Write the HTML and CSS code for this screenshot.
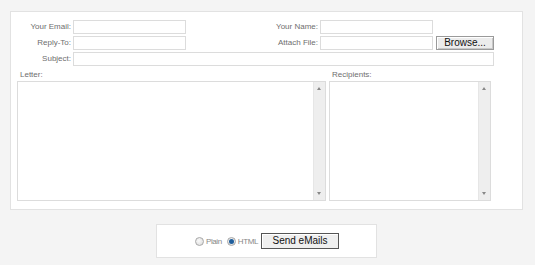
FILE: index.html
```html
<!DOCTYPE html>
<html>
<head>
<meta charset="utf-8">
<link rel="stylesheet" href="styles.css">
</head>
<body>
<div class="panel">
  <div class="fields">
    <label class="lbl">Your Email:</label>
    <input class="inp" type="text">
    <label class="lbl">Your Name:</label>
    <input class="inp" type="text">
    <span></span>
    <label class="lbl">Reply-To:</label>
    <input class="inp" type="text">
    <label class="lbl">Attach File:</label>
    <input class="inp" type="text">
    <button class="browse" type="button">Browse...</button>
    <label class="lbl">Subject:</label>
    <input class="inp subject" type="text">
  </div>
  <div class="areas">
    <div class="col letter">
      <div class="cap">Letter:</div>
      <div class="box">
        <textarea class="ta"></textarea>
        <div class="sb"><span class="up"></span><span class="down"></span></div>
      </div>
    </div>
    <div class="col recip">
      <div class="cap">Recipients:</div>
      <div class="box">
        <textarea class="ta"></textarea>
        <div class="sb"><span class="up"></span><span class="down"></span></div>
      </div>
    </div>
  </div>
</div>
<div class="send">
  <span class="radio"></span><span class="rtext">Plain</span>
  <span class="radio on"></span><span class="rtext">HTML</span>
  <button class="sendbtn" type="button">Send eMails</button>
</div>
</body>
</html>
```
FILE: styles.css
```css
html, body { margin: 0; padding: 0; }
body {
  background: #f4f4f4;
  font-family: "Liberation Sans", Arial, sans-serif;
  width: 535px;
  height: 265px;
  overflow: hidden;
}
.panel {
  margin: 11px 0 0 10px;
  width: 511px;
  height: 197px;
  background: #fff;
  border: 1px solid #e2e2e2;
}
.fields {
  display: grid;
  grid-template-columns: 62px 113px 134px 113px 61px;
  grid-auto-rows: 14px;
  row-gap: 2px;
  padding-top: 8px;
}
.lbl {
  font-size: 8px;
  color: #6e6e6e;
  text-align: right;
  padding-right: 2px;
  line-height: 14px;
}
.inp {
  box-sizing: border-box;
  height: 14px;
  width: 100%;
  margin: 0;
  padding: 0;
  border: 1px solid #dcdcdc;
  background: #fff;
}
.subject { grid-column: 2 / span 4; }
.browse {
  box-sizing: border-box;
  margin: 0 0 0 3px;
  width: 58px;
  height: 14px;
  padding: 0;
  font-family: "Liberation Sans", Arial, sans-serif;
  font-size: 10px;
  line-height: 12px;
  color: #111;
  background: #ececec;
  border: 1px solid #9a9a9a;
  box-shadow: inset 1px 1px 0 #fff, inset -1px -1px 0 #c8c8c8;
}
.areas {
  display: flex;
  gap: 3px;
  padding-left: 6px;
  margin-top: 3px;
}
.col { display: flex; flex-direction: column; }
.letter { width: 309px; }
.recip { width: 162px; }
.cap {
  font-size: 8px;
  color: #6e6e6e;
  line-height: 11px;
  padding-left: 3px;
  margin-bottom: 1px;
}
.box {
  box-sizing: border-box;
  height: 120px;
  border: 1px solid #dcdcdc;
  display: flex;
  background: #fff;
}
.ta {
  flex: 1;
  border: 0;
  margin: 0;
  padding: 0;
  resize: none;
  outline: none;
  overflow: hidden;
}
.sb {
  width: 11px;
  background: #eeeeee;
  border-left: 1px solid #e6e6e6;
  position: relative;
}
.up, .down {
  position: absolute;
  left: 3px;
  width: 0;
  height: 0;
  border-left: 2px solid transparent;
  border-right: 2px solid transparent;
}
.up { top: 5px; border-bottom: 3px solid #888; }
.down { bottom: 5px; border-top: 3px solid #888; }
.send {
  margin: 14px 0 0 156px;
  width: 219px;
  height: 32px;
  background: #fff;
  border: 1px solid #e2e2e2;
  display: flex;
  align-items: center;
}
.radio {
  box-sizing: border-box;
  width: 9px;
  height: 9px;
  border-radius: 50%;
  border: 1px solid #a8a8a8;
  background: radial-gradient(circle at 40% 40%, #fafafa, #d8d8d8);
  margin-left: 38px;
  position: relative;
}
.radio.on { margin-left: 5px; }
.radio.on::after {
  content: "";
  position: absolute;
  left: 1px;
  top: 1px;
  width: 5px;
  height: 5px;
  border-radius: 50%;
  background: #1f5e9c;
}
.rtext {
  font-size: 8px;
  color: #888;
  margin-left: 2px;
  letter-spacing: -0.4px;
}
.sendbtn {
  box-sizing: border-box;
  margin: 0 0 0 3px;
  width: 78px;
  height: 16px;
  padding: 0;
  font-family: "Liberation Sans", Arial, sans-serif;
  font-size: 10px;
  line-height: 14px;
  color: #111;
  background: #efefef;
  border: 1px solid #555;
  box-shadow: inset 1px 1px 0 #fff;
}
```
